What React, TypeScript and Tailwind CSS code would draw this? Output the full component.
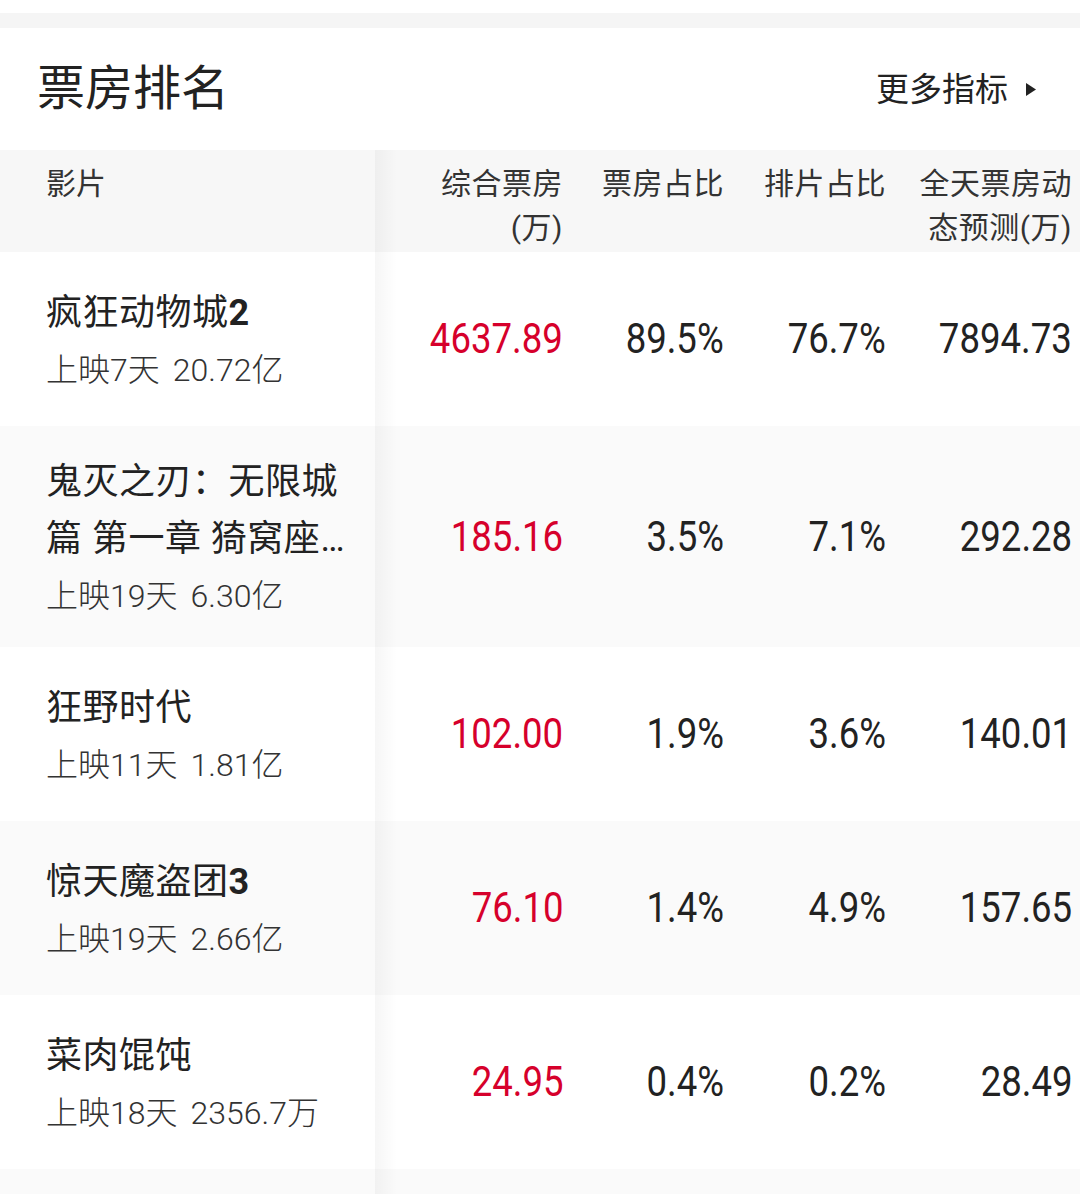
import React from "react";

type Row = {
  name: React.ReactNode;
  days: string;
  total: string;
  box: string;
  boxRate: string;
  showRate: string;
  pred: string;
};

const rows: Row[] = [
  {
    name: (
      <>
        疯狂动物城<span className="font-bold">2</span>
      </>
    ),
    days: "上映7天",
    total: "20.72亿",
    box: "4637.89",
    boxRate: "89.5%",
    showRate: "76.7%",
    pred: "7894.73",
  },
  {
    name: "鬼灭之刃：无限城篇 第一章 猗窝座再袭",
    days: "上映19天",
    total: "6.30亿",
    box: "185.16",
    boxRate: "3.5%",
    showRate: "7.1%",
    pred: "292.28",
  },
  {
    name: "狂野时代",
    days: "上映11天",
    total: "1.81亿",
    box: "102.00",
    boxRate: "1.9%",
    showRate: "3.6%",
    pred: "140.01",
  },
  {
    name: (
      <>
        惊天魔盗团<span className="font-bold">3</span>
      </>
    ),
    days: "上映19天",
    total: "2.66亿",
    box: "76.10",
    boxRate: "1.4%",
    showRate: "4.9%",
    pred: "157.65",
  },
  {
    name: "菜肉馄饨",
    days: "上映18天",
    total: "2356.7万",
    box: "24.95",
    boxRate: "0.4%",
    showRate: "0.2%",
    pred: "28.49",
  },
];

const shade =
  "bg-[linear-gradient(to_right,rgba(0,0,0,0.035),rgba(0,0,0,0)_22px)]";

function Num({ children, red }: { children: React.ReactNode; red?: boolean }) {
  return (
    <span
      className={`inline-block origin-right scale-x-[0.87] ${red ? "text-[#d6002b]" : "text-[#222]"}`}
    >
      {children}
    </span>
  );
}

export default function App() {
  return (
    <div
      className="w-[1080px] bg-white text-[#222]"
      style={{ fontFamily: "Roboto, 'Noto Sans CJK SC', 'Noto Sans', sans-serif" }}
    >
      <div className="h-[13px] bg-white" />
      <div className="h-[15px] bg-[#f5f5f5]" />
      <div className="flex h-[122px] items-center justify-between pl-[37px] pr-[43px]">
        <div className="text-[48px] leading-none text-[#222]">票房排名</div>
        <div className="flex items-center text-[33px] leading-none text-[#222]">
          <span>更多指标</span>
          <svg width="12" height="15" viewBox="0 0 12 15" className="ml-[17px]">
            <path d="M1 1 L11 7.5 L1 14 Z" fill="#222" />
          </svg>
        </div>
      </div>

      {/* table header */}
      <div className="flex h-[102px] bg-[#f7f7f7] text-[30px] leading-[44px] text-[#333]">
        <div className="w-[375px] shrink-0 pl-[46px] pt-[12px]">影片</div>
        <div className={`flex flex-1 pr-[8px] pt-[12px] ${shade}`}>
          <div className="w-[188px] text-right tracking-[0.5px]">
            <div>综合票房</div>
            <div>(万)</div>
          </div>
          <div className="w-[161px] text-right tracking-[0.5px]">票房占比</div>
          <div className="w-[162px] text-right tracking-[0.5px]">排片占比</div>
          <div className="w-[186px] text-right tracking-[0.5px]">
            <div>全天票房动</div>
            <div>态预测(万)</div>
          </div>
        </div>
      </div>

      {rows.map((r, i) => (
        <div
          key={i}
          className={`flex min-h-[174px] ${i % 2 === 1 ? "bg-[#fafafa]" : "bg-white"}`}
        >
          <div className="flex w-[375px] shrink-0 flex-col justify-center pt-[28px] pb-[22px] pl-[46px] pr-[14px]">
            <div className="line-clamp-2 text-[36px] leading-[57px] tracking-[0.5px] text-[#222]">
              {r.name}
            </div>
            <div className="text-[32px] leading-[57px] font-light text-[#333]">
              {r.days}
              <span className="ml-[13px]">{r.total}</span>
            </div>
          </div>
          <div
            className={`flex flex-1 items-center pr-[8px] text-[42px] leading-none ${shade}`}
          >
            <div className="w-[188px] text-right">
              <Num red>{r.box}</Num>
            </div>
            <div className="w-[161px] text-right">
              <Num>{r.boxRate}</Num>
            </div>
            <div className="w-[162px] text-right">
              <Num>{r.showRate}</Num>
            </div>
            <div className="w-[186px] text-right">
              <Num>{r.pred}</Num>
            </div>
          </div>
        </div>
      ))}
      <div className="flex h-[174px] bg-[#fafafa]">
        <div className="w-[375px] shrink-0" />
        <div className={`flex-1 ${shade}`} />
      </div>
    </div>
  );
}
